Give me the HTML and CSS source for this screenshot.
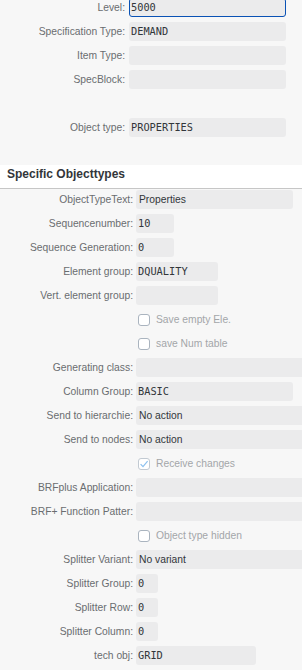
FILE: index.html
```html
<!DOCTYPE html>
<html>
<head>
<meta charset="utf-8">
<link rel="stylesheet" href="styles.css">
</head>
<body>
<div class="page">
  <section class="form form-top">
    <label class="lbl">Level:</label>
    <div class="inp w-top focused mono">5000</div>
    <label class="lbl">Specification Type:</label>
    <div class="inp w-top mono">DEMAND</div>
    <label class="lbl">Item Type:</label>
    <div class="inp w-top"></div>
    <label class="lbl">SpecBlock:</label>
    <div class="inp w-top"></div>
    <div class="spacer"></div>
    <div class="spacer"></div>
    <label class="lbl">Object type:</label>
    <div class="inp w-top mono">PROPERTIES</div>
  </section>

  <h2 class="section-title">Specific Objecttypes</h2>

  <section class="form form-main">
    <label class="lbl">ObjectTypeText:</label>
    <div class="inp w-long">Properties</div>
    <label class="lbl">Sequencenumber:</label>
    <div class="inp w-num mono">10</div>
    <label class="lbl">Sequence Generation:</label>
    <div class="inp w-num mono">0</div>
    <label class="lbl">Element group:</label>
    <div class="inp w-mid mono">DQUALITY</div>
    <label class="lbl">Vert. element group:</label>
    <div class="inp w-mid"></div>

    <div class="spacer"></div>
    <div class="check-row"><span class="cb"></span><span class="cb-text">Save empty Ele.</span></div>
    <div class="spacer"></div>
    <div class="check-row"><span class="cb"></span><span class="cb-text">save Num table</span></div>

    <label class="lbl">Generating class:</label>
    <div class="inp w-wide"></div>
    <label class="lbl">Column Group:</label>
    <div class="inp w-long mono">BASIC</div>
    <label class="lbl">Send to hierarchie:</label>
    <div class="inp w-wide">No action</div>
    <label class="lbl">Send to nodes:</label>
    <div class="inp w-wide">No action</div>

    <div class="spacer"></div>
    <div class="check-row"><span class="cb checked"><svg viewBox="0 0 12 12" width="12" height="12"><path d="M2.6 6.2 L5 8.6 L9.6 3.2" fill="none" stroke="#8cc1ef" stroke-width="1.2"/></svg></span><span class="cb-text">Receive changes</span></div>

    <label class="lbl">BRFplus Application:</label>
    <div class="inp w-wide"></div>
    <label class="lbl">BRF+ Function Patter:</label>
    <div class="inp w-wide"></div>

    <div class="spacer"></div>
    <div class="check-row"><span class="cb"></span><span class="cb-text">Object type hidden</span></div>

    <label class="lbl">Splitter Variant:</label>
    <div class="inp w-wide">No variant</div>
    <label class="lbl">Splitter Group:</label>
    <div class="inp w-xs mono">0</div>
    <label class="lbl">Splitter Row:</label>
    <div class="inp w-xs mono">0</div>
    <label class="lbl">Splitter Column:</label>
    <div class="inp w-xs mono">0</div>
    <label class="lbl">tech obj:</label>
    <div class="inp w-tech mono">GRID</div>
  </section>
</div>
</body>
</html>
```

FILE: styles.css
```css
html, body {
  margin: 0;
  padding: 0;
  overflow: hidden;
  background: #f7f7f7;
}

body {
  font-family: "Liberation Sans", Arial, sans-serif;
  font-size: 10.3px;
  color: #32363a;
}

.page {
  width: 302px;
  overflow: hidden;
}

.form {
  display: grid;
  row-gap: 5px;
  align-items: center;
}

.form-top {
  grid-template-columns: 125px 1fr;
  column-gap: 4px;
  margin-top: -2px;
  padding-bottom: 28px;
}

.form-main {
  grid-template-columns: 133px 1fr;
  column-gap: 3px;
  padding-top: 1px;
  padding-bottom: 10px;
}

.lbl {
  text-align: right;
  color: #6a6d70;
  white-space: nowrap;
  line-height: 19px;
}

.spacer {
  height: 19px;
}

.inp {
  box-sizing: border-box;
  height: 19px;
  line-height: 19px;
  padding: 0 2px 0 3px;
  background: #ebebec;
  border-radius: 3px;
  color: #32363a;
  white-space: nowrap;
  overflow: hidden;
}

.mono {
  font-family: "DejaVu Sans Mono", "Liberation Mono", monospace;
  font-size: 10.3px;
  padding-left: 2px;
}

.focused {
  border: 1px solid #0a52b5;
  line-height: 17px;
  padding-left: 1px;
}

.w-top { width: 157px; }
.w-long { width: 157px; }
.w-num { width: 38px; }
.w-mid { width: 82px; }
.w-xs { width: 22px; }
.w-tech { width: 120px; }
.w-wide { width: 200px; }

.section-title {
  margin: 0;
  background: #ffffff;
  font-size: 12px;
  font-weight: bold;
  line-height: 16px;
  color: #32363a;
  padding: 1px 0 6px 7px;
  border-bottom: 1px solid #c6c6c6;
}

.check-row {
  height: 19px;
  display: flex;
  align-items: center;
  padding-left: 2px;
  gap: 6px;
}

.cb {
  box-sizing: border-box;
  width: 12px;
  height: 12px;
  border: 1px solid #aab4bf;
  border-radius: 3px;
  background: #ffffff;
  display: flex;
  align-items: center;
  justify-content: center;
  position: relative;
}

.cb.checked {
  border-color: #c2cad2;
}

.cb svg {
  position: absolute;
  left: -1px;
  top: -1px;
}

.cb-text {
  color: #a3a6a9;
  white-space: nowrap;
}
```
